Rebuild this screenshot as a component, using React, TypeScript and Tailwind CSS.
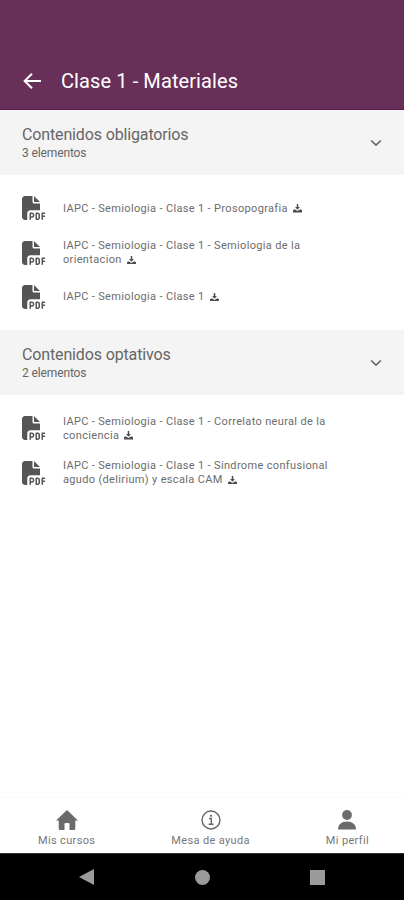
import React from "react";
import { FaFilePdf } from "react-icons/fa6";

type Item = { lines: string[] };

function DownloadIcon() {
  return (
    <svg viewBox="0 0 18 17" className="ml-[5px] inline-block h-[8.5px] w-[9px] align-[-1px]" fill="#4c4c4c">
      <path d="M7.500 0h3v6h3.300L9 11.500 4.200 6h3.300z" />
      <path d="M0 12.500 3.500 10.500 9 14l5.500-3.500L18 12.500V17H0z" />
    </svg>
  );
}

function Section({ title, count }: { title: string; count: string }) {
  return (
    <div className="flex h-[65px] items-center justify-between bg-[#f4f4f4] pr-[22px] pl-[22px]">
      <div>
        <div className="text-[16px] leading-[20px] tracking-[-0.14px] text-[#666]">{title}</div>
        <div className="text-[12px] leading-[16px] tracking-[-0.12px] text-[#666]">{count}</div>
      </div>
      <svg viewBox="0 0 12 8" className="h-[8px] w-[12px]" fill="none" stroke="#666" strokeWidth="1.7">
        <path d="M1.200 1.500 6 6 10.800 1.500" />
      </svg>
    </div>
  );
}

function Row({ lines }: Item) {
  return (
    <div className="flex h-[44.4px] items-center pl-[22px]">
      <FaFilePdf className="h-[24px] w-[24px] shrink-0 text-[#555]" />
      <div className="ml-[17px] pt-px text-[11px] leading-[14px] tracking-[0.34px] whitespace-nowrap text-[#6c6c6c]">
        {lines.map((line, i) => (
          <div key={line}>
            {line}
            {i === lines.length - 1 && <DownloadIcon />}
          </div>
        ))}
      </div>
    </div>
  );
}

export default function App() {
  return (
    <div className="flex h-[900px] w-[404px] flex-col overflow-hidden bg-white font-['Roboto',sans-serif]">
      <header className="flex h-[110px] shrink-0 items-end border-b border-[#5a1c4c] bg-[#682f59] pb-[16px] pl-[23px]">
        <svg viewBox="0 0 18 16" className="mb-[4px] h-[16px] w-[18px]" fill="none" stroke="#fff" strokeWidth="2">
          <path d="M18 8H2M9 .8 1.6 8 9 15.2" />
        </svg>
        <h1 className="ml-[20px] text-[20px] leading-[24px] tracking-[0.1px] font-normal text-white">Clase 1 - Materiales</h1>
      </header>

      <main className="flex grow flex-col">
        <Section title="Contenidos obligatorios" count="3 elementos" />
        <div className="h-[155px] pt-[11px]">
          <Row lines={["IAPC - Semiologia - Clase 1 - Prosopografia"]} />
          <Row lines={["IAPC - Semiologia - Clase 1 - Semiologia de la", "orientacion"]} />
          <Row lines={["IAPC - Semiologia - Clase 1"]} />
        </div>
        <Section title="Contenidos optativos" count="2 elementos" />
        <div className="pt-[11px]">
          <Row lines={["IAPC - Semiologia - Clase 1 - Correlato neural de la", "conciencia"]} />
          <Row lines={["IAPC - Semiologia - Clase 1 - Sindrome confusional", "agudo (delirium) y escala CAM"]} />
        </div>
      </main>

      <nav className="flex h-[56px] shrink-0 justify-between border-t border-[#fafafa] pt-[12px] pr-[35px] pl-[38px] text-[11px] leading-[14px] tracking-[0.35px] text-[#777]">
        <div className="flex flex-col items-center">
          <svg viewBox="0 0 22 20" className="mb-[4px] h-[20px] w-[22px]" fill="#6b6b6b">
            <path d="M11 0 22 10.4H19.3V18.5Q19.3 20 17.8 20H13.5V14Q13.5 13 12.5 13H9.5Q8.500 13 8.500 14V20H4.200Q2.700 20 2.700 18.500V10.400H0Z" />
          </svg>
          Mis cursos
        </div>
        <div className="flex flex-col items-center">
          <svg viewBox="0 0 20 20" className="mb-[4px] h-[20px] w-[20px]" fill="none" stroke="#666" strokeWidth="1.4">
            <circle cx="10" cy="10" r="9" />
            <path d="M8 8.500H10.300V14.200M7.600 14.300H12.600" />
            <circle cx="10" cy="5.800" r="1.100" fill="#666" stroke="none" />
          </svg>
          Mesa de ayuda
        </div>
        <div className="flex flex-col items-center">
          <svg viewBox="0 0 18 20" className="mb-[4px] h-[20px] w-[18px]" fill="#6b6b6b">
            <circle cx="9" cy="5" r="4.900" />
            <path d="M0 19.500C0 14.500 3.500 11.500 9 11.500S18 14.500 18 19.500Z" />
          </svg>
          Mi perfil
        </div>
      </nav>

      <footer className="flex h-[47px] shrink-0 items-center justify-between border-t border-[#333] bg-black pr-[79px] pl-[79px]">
        <svg viewBox="0 0 15 16" className="h-[16px] w-[15px]" fill="#9b9b9b">
          <path d="M0 8 15 0V16Z" />
        </svg>
        <div className="h-[15px] w-[15px] rounded-full bg-[#9b9b9b]" />
        <div className="h-[15px] w-[15px] bg-[#9b9b9b]" />
      </footer>
    </div>
  );
}
